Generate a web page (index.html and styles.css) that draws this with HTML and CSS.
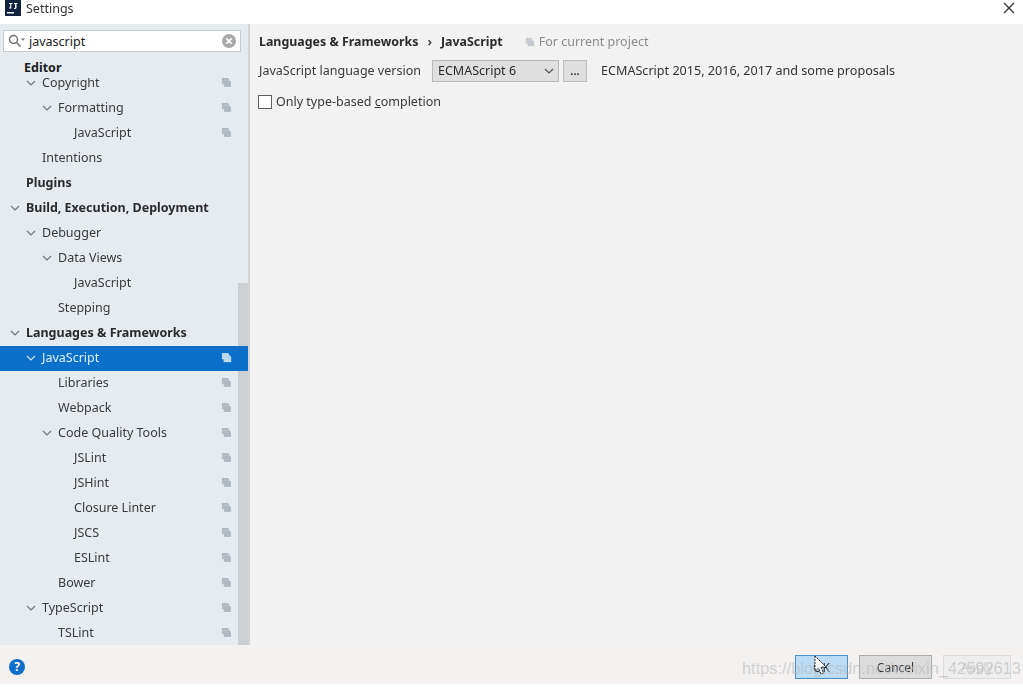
FILE: index.html
```html
<!DOCTYPE html>
<html lang="en">
<head>
<meta charset="utf-8">
<title>Settings</title>
<link rel="stylesheet" href="styles.css">
</head>
<body>
<svg class="defs" width="0" height="0" aria-hidden="true">
  <defs>
    <symbol id="chev" viewBox="0 0 10 10"><path d="M1 3l4 4 4-4" fill="none" stroke="currentColor" stroke-width="1.2"/></symbol>
    <symbol id="proj" viewBox="0 0 12 12"><path d="M1 1h6.500l1.500 1.500V8H1z" fill="currentColor"/><path d="M3 3.500h6l2 2V11H3z" fill="currentColor" stroke="#fff" stroke-opacity=".4" stroke-width=".5"/></symbol>
  </defs>
</svg>
<div class="window">
  <header class="titlebar">
    <svg class="logo" width="16" height="16" viewBox="0 0 16 16"><rect width="16" height="16" fill="#10233f"/><rect x="2" y="12" width="7" height="1.500" fill="#fff"/><path d="M4 3h3.500v1H6.300v4.500H4V7.500h1.200V4H4zM9 3h3.500v1h-1v3.800c0 .9-.8 1.200-2.500 1.200V8c.7 0 1-.1 1-.5V4H9z" fill="#fff"/></svg>
    <span class="title">Settings</span>
    <svg class="close" width="12" height="12" viewBox="0 0 12 12"><path d="M1 1l10 10M11 1L1 11" stroke="#333" stroke-width="1.300"/></svg>
  </header>
  <div class="main">
    <aside class="sidebar">
      <div class="search">
        <svg class="glass" width="18" height="14" viewBox="0 0 18 14"><circle cx="5.500" cy="5.500" r="4" fill="none" stroke="#6e6e6e" stroke-width="1.400"/><path d="M8.500 8.500l4 4" stroke="#6e6e6e" stroke-width="1.600"/><path d="M13 4.500h4l-2 2.200z" fill="#6e6e6e"/></svg>
        <span class="query">javascript</span>
        <svg class="clear" width="14" height="14" viewBox="0 0 14 14"><circle cx="7" cy="7" r="7" fill="#a9a9a9"/><path d="M4.300 4.300l5.400 5.400M9.700 4.300l-5.400 5.400" stroke="#fff" stroke-width="1.700"/></svg>
      </div>
      <div class="tree-wrap">
        <div class="sticky">Editor</div>
        <ul class="tree">
          <li class="row l1"><svg class="chev"><use href="#chev"/></svg><span class="label">Copyright</span><svg class="proj"><use href="#proj"/></svg></li>
          <li class="row l2"><svg class="chev"><use href="#chev"/></svg><span class="label">Formatting</span><svg class="proj"><use href="#proj"/></svg></li>
          <li class="row l3"><span class="label">JavaScript</span><svg class="proj"><use href="#proj"/></svg></li>
          <li class="row l1 nochev"><span class="label">Intentions</span></li>
          <li class="row l0 nochev"><span class="label bold">Plugins</span></li>
          <li class="row l0"><svg class="chev"><use href="#chev"/></svg><span class="label bold">Build, Execution, Deployment</span></li>
          <li class="row l1"><svg class="chev"><use href="#chev"/></svg><span class="label">Debugger</span></li>
          <li class="row l2"><svg class="chev"><use href="#chev"/></svg><span class="label">Data Views</span></li>
          <li class="row l3"><span class="label">JavaScript</span></li>
          <li class="row l2 nochev"><span class="label">Stepping</span></li>
          <li class="row l0"><svg class="chev"><use href="#chev"/></svg><span class="label bold">Languages &amp; Frameworks</span></li>
          <li class="row l1 selected"><svg class="chev"><use href="#chev"/></svg><span class="label">JavaScript</span><svg class="proj"><use href="#proj"/></svg></li>
          <li class="row l2 nochev"><span class="label">Libraries</span><svg class="proj"><use href="#proj"/></svg></li>
          <li class="row l2 nochev"><span class="label">Webpack</span><svg class="proj"><use href="#proj"/></svg></li>
          <li class="row l2"><svg class="chev"><use href="#chev"/></svg><span class="label">Code Quality Tools</span><svg class="proj"><use href="#proj"/></svg></li>
          <li class="row l3"><span class="label">JSLint</span><svg class="proj"><use href="#proj"/></svg></li>
          <li class="row l3"><span class="label">JSHint</span><svg class="proj"><use href="#proj"/></svg></li>
          <li class="row l3"><span class="label">Closure Linter</span><svg class="proj"><use href="#proj"/></svg></li>
          <li class="row l3"><span class="label">JSCS</span><svg class="proj"><use href="#proj"/></svg></li>
          <li class="row l3"><span class="label">ESLint</span><svg class="proj"><use href="#proj"/></svg></li>
          <li class="row l2 nochev"><span class="label">Bower</span><svg class="proj"><use href="#proj"/></svg></li>
          <li class="row l1"><svg class="chev"><use href="#chev"/></svg><span class="label">TypeScript</span><svg class="proj"><use href="#proj"/></svg></li>
          <li class="row l2 nochev"><span class="label">TSLint</span><svg class="proj"><use href="#proj"/></svg></li>
        </ul>
        <div class="scrollbar"></div>
      </div>
    </aside>
    <section class="content">
      <div class="crumbs">
        <span class="crumb">Languages &amp; Frameworks</span>
        <span class="sep">›</span>
        <span class="crumb">JavaScript</span>
        <span class="scope"><svg class="scope-icon" width="10" height="10"><use href="#proj"/></svg>For current project</span>
      </div>
      <div class="lang-row">
        <span class="lang-label">JavaScript language version</span>
        <div class="select"><span>ECMAScript 6</span><svg class="select-chev"><use href="#chev"/></svg></div>
        <div class="more"><span class="more-dots">...</span></div>
        <span class="lang-desc">ECMAScript 2015, 2016, 2017 and some proposals</span>
      </div>
      <label class="check-row"><span class="check"></span><span class="check-text">Only type-based <u>c</u>ompletion</span></label>
    </section>
  </div>
  <footer class="footer">
    <svg class="help" width="16" height="16" viewBox="0 0 16 16"><circle cx="8" cy="8" r="8" fill="#0f6fcb"/><text x="8" y="12" text-anchor="middle" class="help-mark">?</text></svg>
    <div class="buttons">
      <div class="btn ok">OK</div>
      <div class="btn cancel">Cancel</div>
      <div class="btn apply">Apply</div>
    </div>
    <span class="watermark">https://blog.csdn.net/weixin_42592613</span>
    <svg class="cursor" width="16" height="22" viewBox="0 0 16 22"><path d="M2 1v15l3.500-3 2.500 6 2.500-1-2.500-6h5z" fill="#fff" stroke="#222" stroke-dasharray="2 1"/></svg>
  </footer>
</div>
</body>
</html>
```

FILE: styles.css
```css
* { box-sizing: border-box; }
html, body { margin: 0; padding: 0; }
body {
  width: 1023px;
  height: 687px;
  overflow: hidden;
  background: #fcfefe;
  font-family: "Noto Sans", "Open Sans", sans-serif;
  font-size: 12.500px;
  color: #2b2b2b;
}
.defs { position: absolute; }
.window { display: flex; flex-direction: column; height: 684px; background: #f2f2f2; }

.titlebar { display: flex; align-items: center; height: 24px; flex: none; padding: 0 8px 8px 5px; background: #fff; filter: blur(.3px); }
.logo { flex: none; }
.title { margin-left: 5px; color: #333; }
.close { margin-left: auto; }

.main { display: flex; flex: 1; min-height: 0; filter: blur(.3px); }
.sidebar { display: flex; flex-direction: column; width: 250px; flex: none; background: #e6ebf0; border-right: 2px solid #d3d3d3; }
.search { display: flex; align-items: center; height: 22px; flex: none; margin: 6px 7px 0 3px; padding: 0 4px 0 4px; background: #fff; border: 1px solid #c9ccd0; }
.glass { flex: none; }
.query { margin-left: 3px; color: #222; }
.clear { margin-left: auto; }

.tree-wrap { position: relative; flex: 1; min-height: 0; overflow: hidden; }
.sticky { position: absolute; left: 0; top: 0; z-index: 2; width: 238px; height: 26px; padding: 8px 0 0 24px; line-height: 16px; font-weight: 700; color: #1c1c1c; background: #e6ebf0; }
.tree { list-style: none; margin: 19px 0 0; padding: 0 0 2px; }
.row { position: relative; display: flex; align-items: center; height: 25px; padding-bottom: 2px; color: #3a3a3a; }
.label { white-space: nowrap; }
.bold { font-weight: 700; color: #2b2b2b; }
.chev { width: 10px; height: 10px; flex: none; margin-right: 6px; color: #6e7680; }
.l0 { padding-left: 10px; }
.l1 { padding-left: 26px; }
.l2 { padding-left: 42px; }
.l3 { padding-left: 74px; }
.nochev.l0 { padding-left: 26px; }
.nochev.l1 { padding-left: 42px; }
.nochev.l2 { padding-left: 58px; }
.proj { width: 11px; height: 11px; flex: none; margin-left: auto; margin-right: 16px; color: #b0b8c0; }
.selected { z-index: 1; width: 248px; background: #0a70c9; }
.selected .label { color: #dcefff; }
.selected .chev { color: #cfe6fa; }
.selected .proj { color: #b9d6ee; }
.scrollbar { position: absolute; left: 238px; top: 231px; bottom: 0; width: 10px; background: #ccd0d3; }

.content { flex: 1; min-width: 0; padding: 9px 9px 0 9px; }
.crumbs { display: flex; align-items: center; height: 17px; }
.crumb { font-weight: 700; color: #2b2b2b; font-size: 12.400px; }
.sep { margin: 0 9px; font-weight: 700; color: #444; }
.scope { display: flex; align-items: center; margin-left: 22px; color: #8c8c8c; }
.scope-icon { margin-right: 4px; color: #c3c9cf; }
.lang-row { display: flex; align-items: center; height: 23px; margin-top: 9px; }
.lang-label { width: 173px; flex: none; margin-top: -1px; color: #3a3a3a; }
.select { display: flex; align-items: center; justify-content: space-between; width: 127px; height: 22px; flex: none; padding: 0 4px 0 5px; background: #dfdfdf; border: 1px solid #b9b9b9; color: #2b2b2b; }
.select-chev { width: 10px; height: 10px; color: #555; }
.more { display: flex; align-items: center; justify-content: center; width: 24px; height: 22px; flex: none; margin-left: 4px; background: #dedede; border: 1px solid #bdbdbd; }
.more-dots { font-weight: 700; font-size: 11px; line-height: 1; }
.lang-desc { margin-left: 14px; margin-top: -1px; font-size: 12.600px; color: #333; }
.check-row { display: flex; align-items: center; height: 20px; margin-top: 10px; margin-left: -1px; color: #3a3a3a; }
.check { width: 14px; height: 14px; flex: none; margin-right: 4px; background: #fff; border: 1px solid #5f5f5f; }
.check-text { margin-top: -1px; }

.footer { position: relative; display: flex; align-items: center; height: 39px; flex: none; padding: 5px 12px 0 9px; background: #f3f2f1; }
.help-mark { fill: #fff; font-size: 12px; font-weight: 700; font-family: "Noto Sans", sans-serif; }
.buttons { display: flex; gap: 11px; margin-left: auto; }
.btn { display: flex; align-items: center; justify-content: center; height: 24px; font-size: 12px; color: #333; filter: blur(.3px); }
.ok { width: 53px; background: #bcdcf5; border: 1px solid #4a8fc9; }
.cancel { width: 73px; background: #dcdcdc; border: 1px solid #adadad; }
.apply { width: 68px; background: #eeeeee; border: 1px solid #dcdcdc; color: #d0d0d0; }
.watermark { position: absolute; left: 742px; top: 14px; font-family: "Liberation Sans", Arial, sans-serif; font-size: 16.400px; color: rgba(185, 185, 185, .62); white-space: nowrap; }
.cursor { position: absolute; left: 813px; top: 10px; }
```
